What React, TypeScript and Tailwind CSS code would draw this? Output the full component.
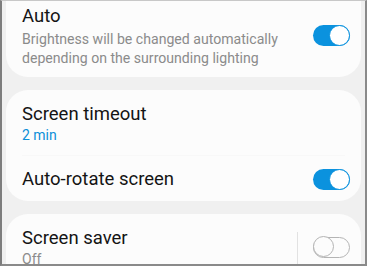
import React from 'react';

function Toggle({ on }: { on: boolean }) {
  if (on) {
    return (
      <div className="relative w-[37px] h-[21px] rounded-full bg-[#0b92de] flex-shrink-0">
        <div className="absolute right-0 top-0 w-[21px] h-[21px] rounded-full bg-white border-[1.5px] border-[#0b92de]" />
      </div>
    );
  }
  return (
    <div className="relative w-[37px] h-[21px] rounded-full border-[1.5px] border-[#b4b4b4] flex-shrink-0">
      <div className="absolute -left-[1.5px] -top-[1.5px] w-[21px] h-[21px] rounded-full border-[1.5px] border-[#b4b4b4] bg-[#fcfcfc]" />
    </div>
  );
}

export default function App() {
  return (
    <div
      className="w-[367px] h-[266px] overflow-hidden bg-[#f0f0f0] border-l-2 border-r-2 border-b-2 border-t border-l-[#7d7d7d] border-r-[#8a8a8a] border-b-[#8a8a8a] border-t-[#c8c8c8] px-[4px]"
      style={{ fontFamily: 'Roboto, "Noto Sans", sans-serif' }}
    >
      {/* Brightness card (top cut off) */}
      <div className="-mt-[20px] bg-[#fcfcfc] rounded-[22px] pl-[16px] pr-[11px] pt-[23px] pb-[10px] flex items-center">
        <div className="flex-1 min-w-0">
          <p className="text-[18.5px] leading-[24px] text-[#141414]">Auto</p>
          <p className="mt-[2px] text-[14.1px] leading-[18.5px] text-[#8b8b8b]">
            Brightness will be changed automatically
            <br />
            depending on the surrounding lighting
          </p>
        </div>
        <Toggle on />
      </div>

      {/* Screen timeout + auto rotate */}
      <div className="mt-[13px] bg-[#fcfcfc] rounded-[22px]">
        <div className="pl-[16px] pr-[11px] pt-[12px] pb-[11px]">
          <p className="text-[18.5px] leading-[24px] text-[#141414]">Screen timeout</p>
          <p className="text-[14px] leading-[18px] text-[#0b8fd8]">2 min</p>
        </div>
        <div className="mx-[16px] h-px bg-[#f8f8f8]" />
        <div className="pl-[16px] pr-[11px] pt-[11px] pb-[10px] flex items-center">
          <p className="flex-1 text-[18.5px] leading-[24px] text-[#141414]">Auto-rotate screen</p>
          <Toggle on />
        </div>
      </div>

      {/* Screen saver */}
      <div className="mt-[13px] bg-[#fcfcfc] rounded-t-[22px] pl-[16px] pr-[11px] pt-[12px] pb-[10px] flex items-center">
        <div className="flex-1 min-w-0">
          <p className="text-[18.5px] leading-[24px] text-[#141414]">Screen saver</p>
          <p className="text-[14px] leading-[18px] text-[#8b8b8b]">Off</p>
        </div>
        <div className="w-px h-[36px] bg-[#e2e2e2] mr-[15px] self-end" />
        <Toggle on={false} />
      </div>
    </div>
  );
}
